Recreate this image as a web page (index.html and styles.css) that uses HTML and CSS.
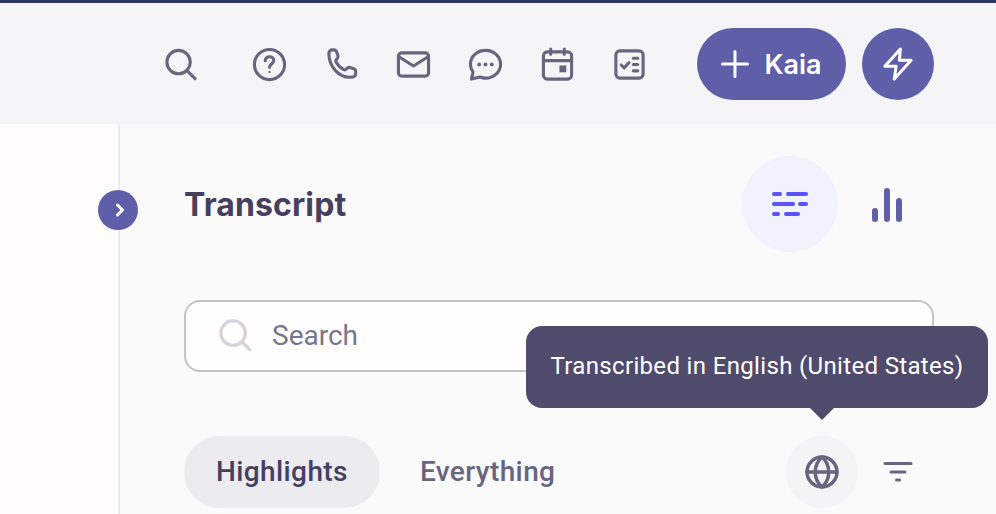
FILE: index.html
```html
<!DOCTYPE html>
<html lang="en">
<head>
  <meta charset="UTF-8">
  <meta name="viewport" content="width=device-width, initial-scale=1.0">
  <title>Transcript</title>
  <link rel="stylesheet" href="styles.css">
</head>
<body>
  <header class="topbar">
    <button class="icon-btn search-btn" aria-label="Search">
      <svg viewBox="0 0 36 36"><circle cx="16" cy="15.5" r="12"/><path d="M25 24.5l8 8"/></svg>
    </button>
    <button class="icon-btn" aria-label="Help">
      <svg viewBox="0 0 36 36"><circle cx="18" cy="18" r="15.5"/><path d="M13.6 14.2c0-2.6 2-4.2 4.4-4.2s4.4 1.6 4.4 3.9c0 3.6-4.4 3.6-4.4 7"/><circle class="dot" cx="18" cy="25.6" r="1.2"/></svg>
    </button>
    <button class="icon-btn" aria-label="Call">
      <svg viewBox="0 0 36 36"><path d="M5 6.500c0-2 1.600-3.500 3.600-3.500h1.600c1.200 0 2.300.7 2.700 1.900l1.400 3.900c.3.900.2 1.900-.4 2.700l-1.300 1.600c-.5.700-.6 1.500-.2 2.300 1.800 3.400 4.600 6.100 8 7.800.8.400 1.700.3 2.300-.3l1.300-1.200c.8-.7 1.900-.9 2.900-.6l3.700 1.300c1.200.4 2 1.500 2 2.700v2.300c0 2.100-1.700 3.700-3.800 3.600C15.800 32.600 5 20.500 5 6.500z"/></svg>
    </button>
    <button class="icon-btn" aria-label="Email">
      <svg viewBox="0 0 36 36"><rect x="2.500" y="6" width="31" height="24" rx="3.500"/><path d="M3 10l15 9.500L33 10"/></svg>
    </button>
    <button class="icon-btn" aria-label="Messages">
      <svg viewBox="0 0 36 36"><path d="M18 3.500c8.500 0 15.500 6.200 15.500 14.200S26.500 32 18 32c-2.400 0-3.800-.4-5.500-1.100L3.500 33l1.700-7.300C3.400 23.300 2.500 20.800 2.500 17.700 2.500 9.700 9.500 3.500 18 3.500z"/><circle class="dot" cx="11.500" cy="18" r="2"/><circle class="dot" cx="18" cy="18" r="2"/><circle class="dot" cx="24.500" cy="18" r="2"/></svg>
    </button>
    <button class="icon-btn" aria-label="Calendar">
      <svg viewBox="0 0 36 36"><rect x="3.500" y="5" width="29" height="28" rx="4"/><path d="M3.500 14h29M11 2v5.500M25 2v5.500"/><rect class="dot" x="20" y="19" width="7" height="7"/></svg>
    </button>
    <button class="icon-btn" aria-label="Tasks">
      <svg viewBox="0 0 36 36"><rect x="4" y="4" width="28" height="28" rx="4"/><path d="M9.500 18.500l3 3 5-5.500M22 11.500h4.500M22 18h4.500M22 24.500h4.500"/></svg>
    </button>
    <button class="add-btn">
      <svg viewBox="0 0 28 28"><path d="M14 1.500v25M1.500 14h25"/></svg>
      <span>Kaia</span>
    </button>
    <button class="bolt-btn" aria-label="Actions">
      <svg viewBox="0 0 32 36"><path d="M18.500 2L2 20.500h12L12 34l18-20H17.500z"/></svg>
    </button>
  </header>

  <div class="content">
    <aside class="sidebar"></aside>
    <main class="panel">
      <div class="panel-head">
        <h1>Transcript</h1>
        <div class="views">
          <button class="view-btn active" aria-label="Lines">
            <svg viewBox="0 0 36 24"><path d="M2 2h6M16 2h18M2 12h19M28 12h6M2 22h4M14 22h12"/></svg>
          </button>
          <button class="view-btn" aria-label="Chart">
            <svg viewBox="0 0 30 34"><path d="M3 23V31M15 3V31M27 13V31"/></svg>
          </button>
        </div>
      </div>

      <div class="search">
        <svg viewBox="0 0 34 34"><circle cx="15" cy="15" r="13"/><path d="M25 25l7.500 7.500"/></svg>
        <span>Search</span>
      </div>

      <div class="tabs">
        <button class="tab active">Highlights</button>
        <button class="tab">Everything</button>
        <div class="tab-tools">
          <button class="tool-btn active" aria-label="Language">
            <svg viewBox="0 0 34 34"><circle cx="17" cy="17" r="15"/><path d="M2 17h30M17 2c-9 8-9 22 0 30M17 2c9 8 9 22 0 30"/></svg>
          </button>
          <button class="tool-btn" aria-label="Filter">
            <svg viewBox="0 0 32 20"><path d="M3 1.500h26M9 10h14M14.500 18h3"/></svg>
          </button>
        </div>
      </div>
    </main>
  </div>

  <button class="collapse" aria-label="Expand">
    <svg viewBox="0 0 10 14"><path d="M2.500 2l5 5-5 5"/></svg>
  </button>
  <div class="tooltip">Transcribed in English (United States)</div>
</body>
</html>
```

FILE: styles.css
```css
* { box-sizing: border-box; }
html, body { height: 100%; }
body {
  margin: 0;
  overflow: hidden;
  position: relative;
  font-family: Roboto, sans-serif;
  color: #46405f;
  background: #fafafb;
}
button {
  border: 0; padding: 0; margin: 0;
  background: none;
  font: inherit; color: inherit;
}
svg {
  display: block;
  fill: none;
  stroke: currentColor;
  stroke-linecap: round;
  stroke-linejoin: round;
}
svg .dot { fill: currentColor; stroke: none; }

.topbar {
  height: 124px;
  border-top: 3px solid #2b3a60;
  background: #f5f5f8;
  display: flex;
  align-items: center;
  justify-content: flex-end;
  padding: 1px 62px 0 0;
  color: #68667f;
}
.icon-btn {
  width: 72px; height: 72px;
  display: flex; align-items: center; justify-content: center;
}
.icon-btn svg { width: 35px; height: 35px; stroke-width: 3.200; }
.search-btn { margin-right: 17px; }
.add-btn {
  width: 149px; height: 72px;
  margin-left: 32px;
  border-radius: 36px;
  background: #5f5ea8;
  color: #fff;
  display: flex; align-items: center; justify-content: center;
  gap: 15px;
  font: 600 27px Inter, sans-serif;
}
.add-btn svg { width: 28px; height: 28px; stroke-width: 3; }
.bolt-btn {
  width: 72px; height: 72px;
  margin-left: 16px;
  border-radius: 50%;
  background: #5f5ea8;
  color: #fff;
  display: flex; align-items: center; justify-content: center;
}
.bolt-btn svg { width: 30px; height: 34px; stroke-width: 3.200; }

.content { display: flex; height: 390px; }
.sidebar {
  width: 120px;
  background: #fffdfb;
  border-right: 2px solid #e9e9f0;
}
.panel {
  flex: 1;
  padding: 32px 62px 0 64px;
  background: #fafafb;
}
.panel-head {
  display: flex; align-items: center; justify-content: space-between;
  height: 96px;
}
h1 {
  margin: 0;
  font: 700 32px Inter, sans-serif;
  letter-spacing: .1px;
  color: #46405f;
}
.views { display: flex; }
.view-btn {
  width: 96px; height: 96px;
  border-radius: 50%;
  display: flex; align-items: center; justify-content: center;
  color: #5f5ea8;
}
.view-btn svg { width: 36px; height: 24px; stroke-width: 4; }
.view-btn:last-child svg { width: 30px; height: 34px; stroke-width: 6; margin: 2px 0 0 2px; }
.view-btn.active { background: #f2f2fe; color: #5a51f8; }

.search {
  margin-top: 48px;
  height: 72px;
  border: 2px solid #c4c4c8;
  border-radius: 16px;
  background: #fffefd;
  display: flex; align-items: center;
  padding: 0 0 2px 34px;
  gap: 21px;
  font-size: 28px;
  color: #77758f;
}
.search svg { width: 32px; height: 32px; stroke-width: 3.500; color: #d3d3da; margin-left: -1px; }

.tabs {
  margin-top: 64px;
  display: flex; gap: 8px;
}
.tab {
  height: 72px;
  padding: 0 32px 2px;
  border-radius: 36px;
  font-size: 28px; font-weight: 500;
  letter-spacing: .4px;
  color: #68667f;
}
.tab.active { background: #ebebf0; color: #46405f; }
.tab-tools { margin-left: auto; display: flex; gap: 4px; }
.tool-btn {
  width: 72px; height: 72px;
  border-radius: 50%;
  display: flex; align-items: center; justify-content: center;
  color: #68667f;
}
.tool-btn.active { background: #f4f4f7; }
.tool-btn svg { width: 34px; height: 34px; stroke-width: 3.500; }
.tool-btn:last-child svg { width: 32px; height: 20px; stroke-width: 3; }

.collapse {
  position: absolute;
  left: 98px; top: 190px;
  width: 40px; height: 40px;
  border-radius: 50%;
  background: #5f5ea8;
  color: #fff;
  display: flex; align-items: center; justify-content: center;
}
.collapse svg { width: 10px; height: 14px; stroke-width: 3; margin-left: 4px; }

.tooltip {
  position: absolute;
  left: 526px; top: 326px;
  width: 462px; height: 82px;
  padding-bottom: 2px;
  border-radius: 16px;
  background: #4f4b6c;
  color: #fff;
  font-size: 24px;
  letter-spacing: .34px;
  display: flex; align-items: center; justify-content: center;
}
.tooltip::after {
  content: "";
  position: absolute;
  left: 284px; top: 82px;
  border: 12px solid transparent;
  border-top-color: #4f4b6c;
  border-bottom: 0;
}
```
